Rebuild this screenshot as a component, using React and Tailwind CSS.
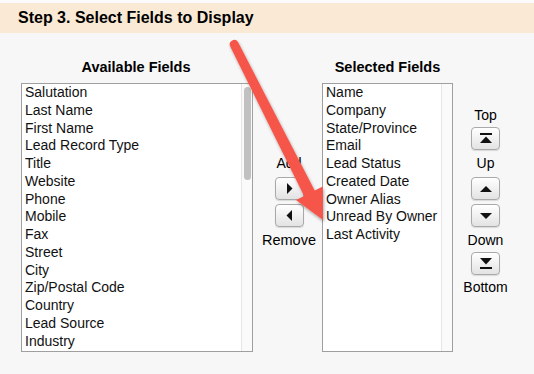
import React from "react";

const available = [
  "Salutation", "Last Name", "First Name", "Lead Record Type", "Title", "Website",
  "Phone", "Mobile", "Fax", "Street", "City", "Zip/Postal Code", "Country",
  "Lead Source", "Industry",
];
const selected = [
  "Name", "Company", "State/Province", "Email", "Lead Status", "Created Date",
  "Owner Alias", "Unread By Owner", "Last Activity",
];

function Btn({ children }) {
  return (
    <div className="w-[29px] h-[23px] rounded-[4px] border border-[#a9a9a9] bg-linear-to-b from-white to-[#e3e3e3] shadow-[0_1px_1px_rgba(0,0,0,0.12)] flex items-center justify-center">
      {children}
    </div>
  );
}

function ListBox({ items, width, thumb }) {
  return (
    <div className="mt-[8px] h-[269px] border border-[#9f9f9f] bg-white flex overflow-hidden" style={{ width }}>
      <div className="flex-1 pl-[3px] overflow-hidden">
        {items.map((t) => (
          <div key={t} className="text-[14px] leading-[17.76px] text-[#111] whitespace-nowrap">{t}</div>
        ))}
      </div>
      <div className="w-[11px] border-l border-[#e6e6e6] bg-[#fafafa] flex justify-center pt-[3px]">
        {thumb && <div className="w-[7px] h-[93px] rounded-full bg-[#c1c1c1]" />}
      </div>
    </div>
  );
}

export default function App() {
  return (
    <div className="relative w-[534px] h-[374px] bg-[#f7f7f7] overflow-hidden font-['Liberation_Sans',Arial,sans-serif] text-black">
      <div className="h-[3px] bg-[#fbfbfb]" />
      <div className="h-[30px] bg-[#fae9d4] flex items-center pl-[18px] text-[16px] font-bold">
        Step 3. Select Fields to Display
      </div>
      <div className="flex pt-[26px] pl-[21px]">
        <div className="w-[232px] flex flex-col">
          <div className="h-[16px] leading-[16px] text-[14.5px] font-bold text-center pr-[2px]">Available Fields</div>
          <ListBox items={available} width={232} thumb />
        </div>
        <div className="w-[69px] pl-[3px] flex flex-col items-center pt-[96px] text-[14px] leading-[16px]">
          <div>Add</div>
          <div className="mt-[6px]">
            <Btn>
              <svg width="7" height="11" viewBox="0 0 7 11"><path d="M1 0 L6.5 5.5 L1 11 Z" fill="#111" /></svg>
            </Btn>
          </div>
          <div className="mt-[4px]">
            <Btn>
              <svg width="7" height="11" viewBox="0 0 7 11"><path d="M6 0 L0.5 5.5 L6 11 Z" fill="#111" /></svg>
            </Btn>
          </div>
          <div className="mt-[5px] text-[14.5px]">Remove</div>
        </div>
        <div className="w-[131px] flex flex-col">
          <div className="h-[16px] leading-[16px] text-[14.5px] font-bold text-center">Selected Fields</div>
          <ListBox items={selected} width={131} />
        </div>
        <div className="w-[65px] flex flex-col items-center pt-[48px] text-[14px] leading-[16px]">
          <div>Top</div>
          <div className="mt-[4px]">
            <Btn>
              <svg width="12" height="11" viewBox="0 0 12 11"><rect x="0" y="0" width="12" height="2" fill="#111" /><path d="M6 3.5 L12 10 L0 10 Z" fill="#111" /></svg>
            </Btn>
          </div>
          <div className="mt-[5px]">Up</div>
          <div className="mt-[6px]">
            <Btn>
              <svg width="12" height="6" viewBox="0 0 12 6"><path d="M6 0 L12 6 L0 6 Z" fill="#111" /></svg>
            </Btn>
          </div>
          <div className="mt-[4px]">
            <Btn>
              <svg width="12" height="6" viewBox="0 0 12 6"><path d="M0 0 L12 0 L6 6 Z" fill="#111" /></svg>
            </Btn>
          </div>
          <div className="mt-[5px]">Down</div>
          <div className="mt-[4px]">
            <Btn>
              <svg width="12" height="11" viewBox="0 0 12 11"><path d="M0 0 L12 0 L6 6.5 Z" fill="#111" /><rect x="0" y="9" width="12" height="2" fill="#111" /></svg>
            </Btn>
          </div>
          <div className="mt-[4px]">Bottom</div>
        </div>
      </div>
      <svg className="absolute inset-0 pointer-events-none" width="534" height="374" viewBox="0 0 534 374">
        <defs>
          <filter id="sh" x="-20%" y="-20%" width="140%" height="140%">
            <feDropShadow dx="1" dy="2" stdDeviation="1.6" floodColor="#000" floodOpacity="0.35" />
          </filter>
        </defs>
        <path
          d="M238 42 L314.7 190.6 L322.8 186.5 L323 220 L296 200.1 L304.1 196 L230 46 A4.5 4.5 0 0 1 238 42 Z"
          fill="#f6574a"
          filter="url(#sh)"
        />
      </svg>
    </div>
  );
}
